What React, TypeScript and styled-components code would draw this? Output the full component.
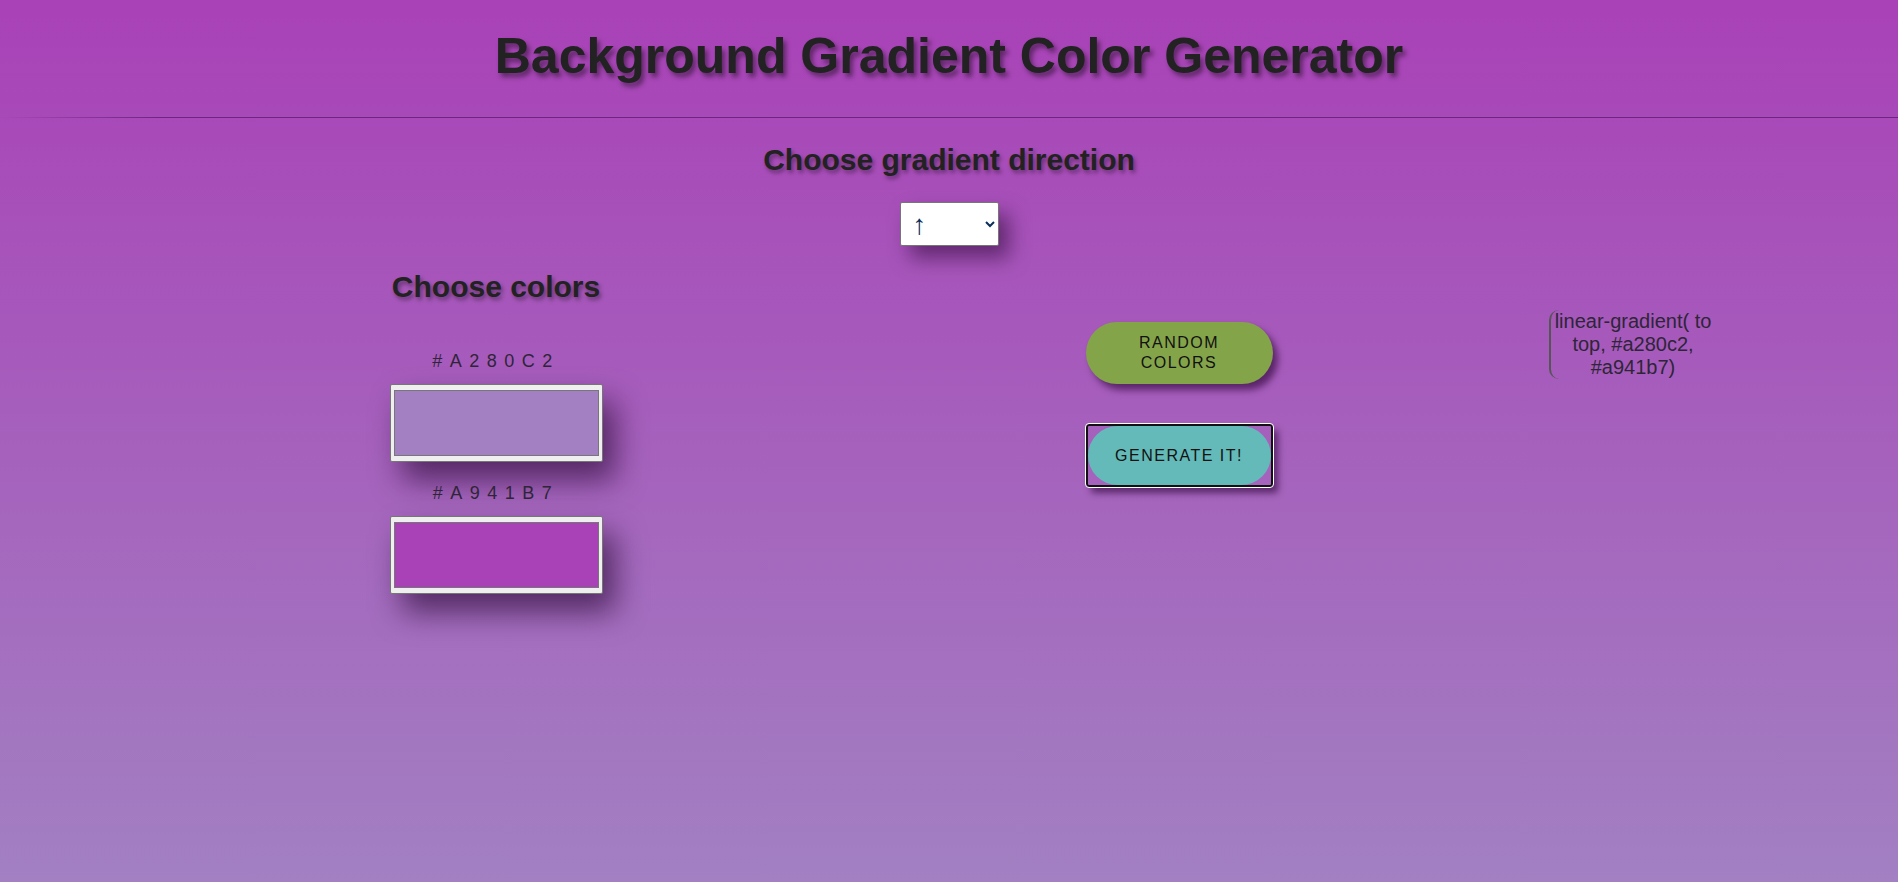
import React, { useState } from 'react'
import styled, { createGlobalStyle } from 'styled-components'

const GlobalStyle = createGlobalStyle`
  html, body {
    margin: 0;
    padding: 0;
  }

  body {
    font-family: 'Liberation Sans', Arial, sans-serif;
  }
`

const directions = [
  { label: '↑', value: 'to top' },
  { label: '↓', value: 'to bottom' },
  { label: '←', value: 'to left' },
  { label: '→', value: 'to right' },
  { label: '↗', value: 'to top right' },
  { label: '↘', value: 'to bottom right' },
  { label: '↙', value: 'to bottom left' },
  { label: '↖', value: 'to top left' },
]

const Page = styled.div<{ $bg: string }>`
  min-height: 100vh;
  background: ${(props) => props.$bg};
  color: #222;
  overflow: hidden;
`

const Title = styled.h1`
  margin: 0;
  padding-top: 27px;
  text-align: center;
  font-size: 50px;
  font-weight: 700;
  color: #222;
  text-shadow: 3px 4px 5px rgba(0, 0, 0, 0.45);
`

const Divider = styled.hr`
  margin: 32px 0 0;
  height: 1px;
  border: 0;
  background: linear-gradient(to right, rgba(100, 30, 120, 0) 0, rgba(100, 30, 120, 0.85) 160px);
`

const Heading = styled.h2`
  margin: 0;
  font-size: 30px;
  font-weight: 700;
  color: #222;
  text-shadow: 2px 3px 4px rgba(0, 0, 0, 0.4);
`

const DirectionSection = styled.section`
  display: flex;
  flex-direction: column;
  align-items: center;
  padding-top: 25px;
  gap: 25px;
`

const DirectionSelect = styled.select`
  width: 99px;
  height: 44px;
  padding: 0 6px 0 8px;
  font-family: 'Liberation Sans', Arial, sans-serif;
  font-size: 28px;
  color: #0c2f5a;
  background: #fff;
  border: 1px solid #767676;
  border-radius: 2px;
  box-shadow: 10px 12px 20px rgba(30, 0, 40, 0.5);
`

const Row = styled.div`
  display: grid;
  grid-template-columns: 992px 374px 1fr;
  margin-top: 24px;
`

const Column = styled.div<{ $top: number }>`
  display: flex;
  flex-direction: column;
  align-items: center;
  padding-top: ${(props) => props.$top}px;
`

const HexLabel = styled.div<{ $gap: number }>`
  margin-top: ${(props) => props.$gap}px;
  font-size: 18px;
  letter-spacing: 7.5px;
  color: #2e2538;
`

const ColorInput = styled.input`
  box-sizing: border-box;
  width: 213px;
  height: 78px;
  margin-top: 12px;
  padding: 1px 1px;
  background: #efefef;
  border: 1px solid #767676;
  border-radius: 2px;
  cursor: pointer;
  box-shadow: 12px 18px 30px rgba(30, 0, 40, 0.6);

  &::-webkit-color-swatch-wrapper {
    padding: 4px 2px;
  }

  &::-webkit-color-swatch {
    border: 1px solid #777;
    border-radius: 0;
  }
`

const PillButton = styled.button<{ $bg: string }>`
  box-sizing: border-box;
  width: 187px;
  height: 62px;
  padding: 0 20px;
  border: 0;
  border-radius: 31px;
  background: ${(props) => props.$bg};
  color: #111;
  font-family: 'Liberation Sans', Arial, sans-serif;
  font-size: 16px;
  line-height: 20px;
  letter-spacing: 1.5px;
  cursor: pointer;
`

const RandomButton = styled(PillButton)`
  box-shadow: 5px 6px 7px rgba(40, 0, 50, 0.6);
`

const FocusRing = styled.div`
  display: flex;
  box-sizing: border-box;
  width: 187px;
  height: 63px;
  margin-top: 40px;
  border: 2px solid #111;
  border-radius: 3px;
  outline: 1px solid #fff;
  box-shadow: 5px 6px 7px rgba(40, 0, 50, 0.6);

  ${PillButton} {
    width: 100%;
    height: 100%;
  }
`

const Result = styled.div`
  box-sizing: border-box;
  width: 166px;
  border-left: 2px solid #555;
  border-radius: 10px;
  font-size: 20px;
  line-height: 23px;
  text-align: center;
  color: #2e2538;
`

const randomHex = () =>
  '#' +
  Math.floor(Math.random() * 0xffffff)
    .toString(16)
    .padStart(6, '0')

export default function App() {
  const [direction, setDirection] = useState('to top')
  const [color1, setColor1] = useState('#a280c2')
  const [color2, setColor2] = useState('#a941b7')
  const [gradient, setGradient] = useState(`linear-gradient( to top, #a280c2, #a941b7)`)

  const build = (d: string, c1: string, c2: string) => `linear-gradient( ${d}, ${c1}, ${c2})`

  const generate = () => setGradient(build(direction, color1, color2))

  const randomize = () => {
    setColor1(randomHex())
    setColor2(randomHex())
  }

  return (
    <Page $bg={gradient}>
      <GlobalStyle />
      <Title>Background Gradient Color Generator</Title>
      <Divider />

      <DirectionSection>
        <Heading>Choose gradient direction</Heading>
        <DirectionSelect value={direction} onChange={(e) => setDirection(e.target.value)}>
          {directions.map((d) => (
            <option key={d.value} value={d.value}>
              {d.label}
            </option>
          ))}
        </DirectionSelect>
      </DirectionSection>

      <Row>
        <Column $top={0}>
          <Heading>Choose colors</Heading>
          <HexLabel $gap={47}>{color1.toUpperCase()}</HexLabel>
          <ColorInput type="color" value={color1} onChange={(e) => setColor1(e.target.value)} />
          <HexLabel $gap={21}>{color2.toUpperCase()}</HexLabel>
          <ColorInput type="color" value={color2} onChange={(e) => setColor2(e.target.value)} />
        </Column>

        <Column $top={52}>
          <RandomButton $bg="#84a44a" onClick={randomize}>
            RANDOM COLORS
          </RandomButton>
          <FocusRing>
            <PillButton $bg="#63bab8" onClick={generate}>
              GENERATE IT!
            </PillButton>
          </FocusRing>
        </Column>

        <Column $top={40}>
          <Result>{gradient}</Result>
        </Column>
      </Row>
    </Page>
  )
}
